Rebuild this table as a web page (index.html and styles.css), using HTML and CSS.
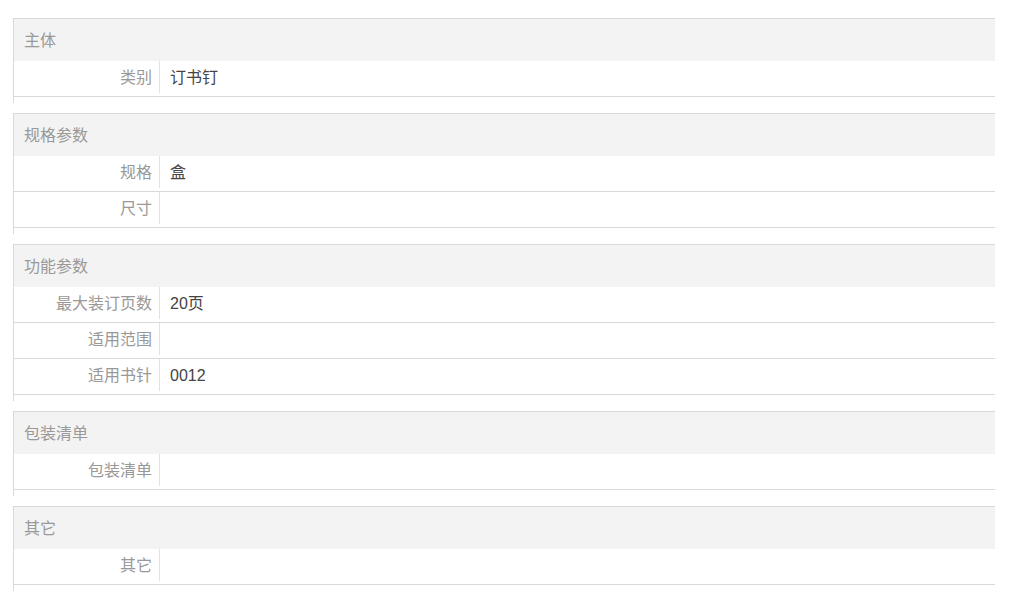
FILE: index.html
```html
<!DOCTYPE html>
<html lang="zh-CN">
<head>
<meta charset="utf-8">
<title>规格参数</title>
<link rel="stylesheet" href="styles.css">
</head>
<body>
<div class="specs">
  <section class="group">
    <h3 class="group-title">主体</h3>
    <dl class="row"><dt class="label">类别</dt><dd class="value">订书钉</dd></dl>
  </section>
  <section class="group">
    <h3 class="group-title">规格参数</h3>
    <dl class="row"><dt class="label">规格</dt><dd class="value">盒</dd></dl>
    <dl class="row"><dt class="label">尺寸</dt><dd class="value"></dd></dl>
  </section>
  <section class="group">
    <h3 class="group-title">功能参数</h3>
    <dl class="row"><dt class="label">最大装订页数</dt><dd class="value">20页</dd></dl>
    <dl class="row"><dt class="label">适用范围</dt><dd class="value"></dd></dl>
    <dl class="row"><dt class="label">适用书针</dt><dd class="value">0012</dd></dl>
  </section>
  <section class="group">
    <h3 class="group-title">包装清单</h3>
    <dl class="row"><dt class="label">包装清单</dt><dd class="value"></dd></dl>
  </section>
  <section class="group">
    <h3 class="group-title">其它</h3>
    <dl class="row"><dt class="label">其它</dt><dd class="value"></dd></dl>
  </section>
</div>
</body>
</html>
```

FILE: styles.css
```css
html, body {
  margin: 0;
  padding: 0;
  background: #fff;
}

body {
  font-family: "Liberation Sans", "Noto Sans CJK SC", sans-serif;
  font-size: 16px;
  color: #444;
}

.specs {
  padding: 18px 15px 0 13px;
  display: flex;
  flex-direction: column;
  gap: 10px;
}

.group {
  border-top: 1px solid #d9d9d9;
  border-left: 1px solid #d9d9d9;
  padding-bottom: 6px;
}

.group-title {
  margin: 0;
  height: 41px;
  padding: 1px 0 0 10px;
  line-height: 41px;
  background: #f3f3f3;
  font-size: 16px;
  font-weight: normal;
  color: #999;
}

.row {
  display: flex;
  margin: 0;
  height: 35px;
  border-bottom: 1px solid #d9d9d9;
}

.label {
  width: 138px;
  height: 31px;
  padding: 1px 7px 0 0;
  line-height: 31px;
  text-align: right;
  border-right: 1px solid #e2e2e2;
  color: #999;
  margin: 0;
}

.value {
  margin: 0;
  padding: 1px 0 0 10px;
  line-height: 31px;
  color: #444;
}
```
